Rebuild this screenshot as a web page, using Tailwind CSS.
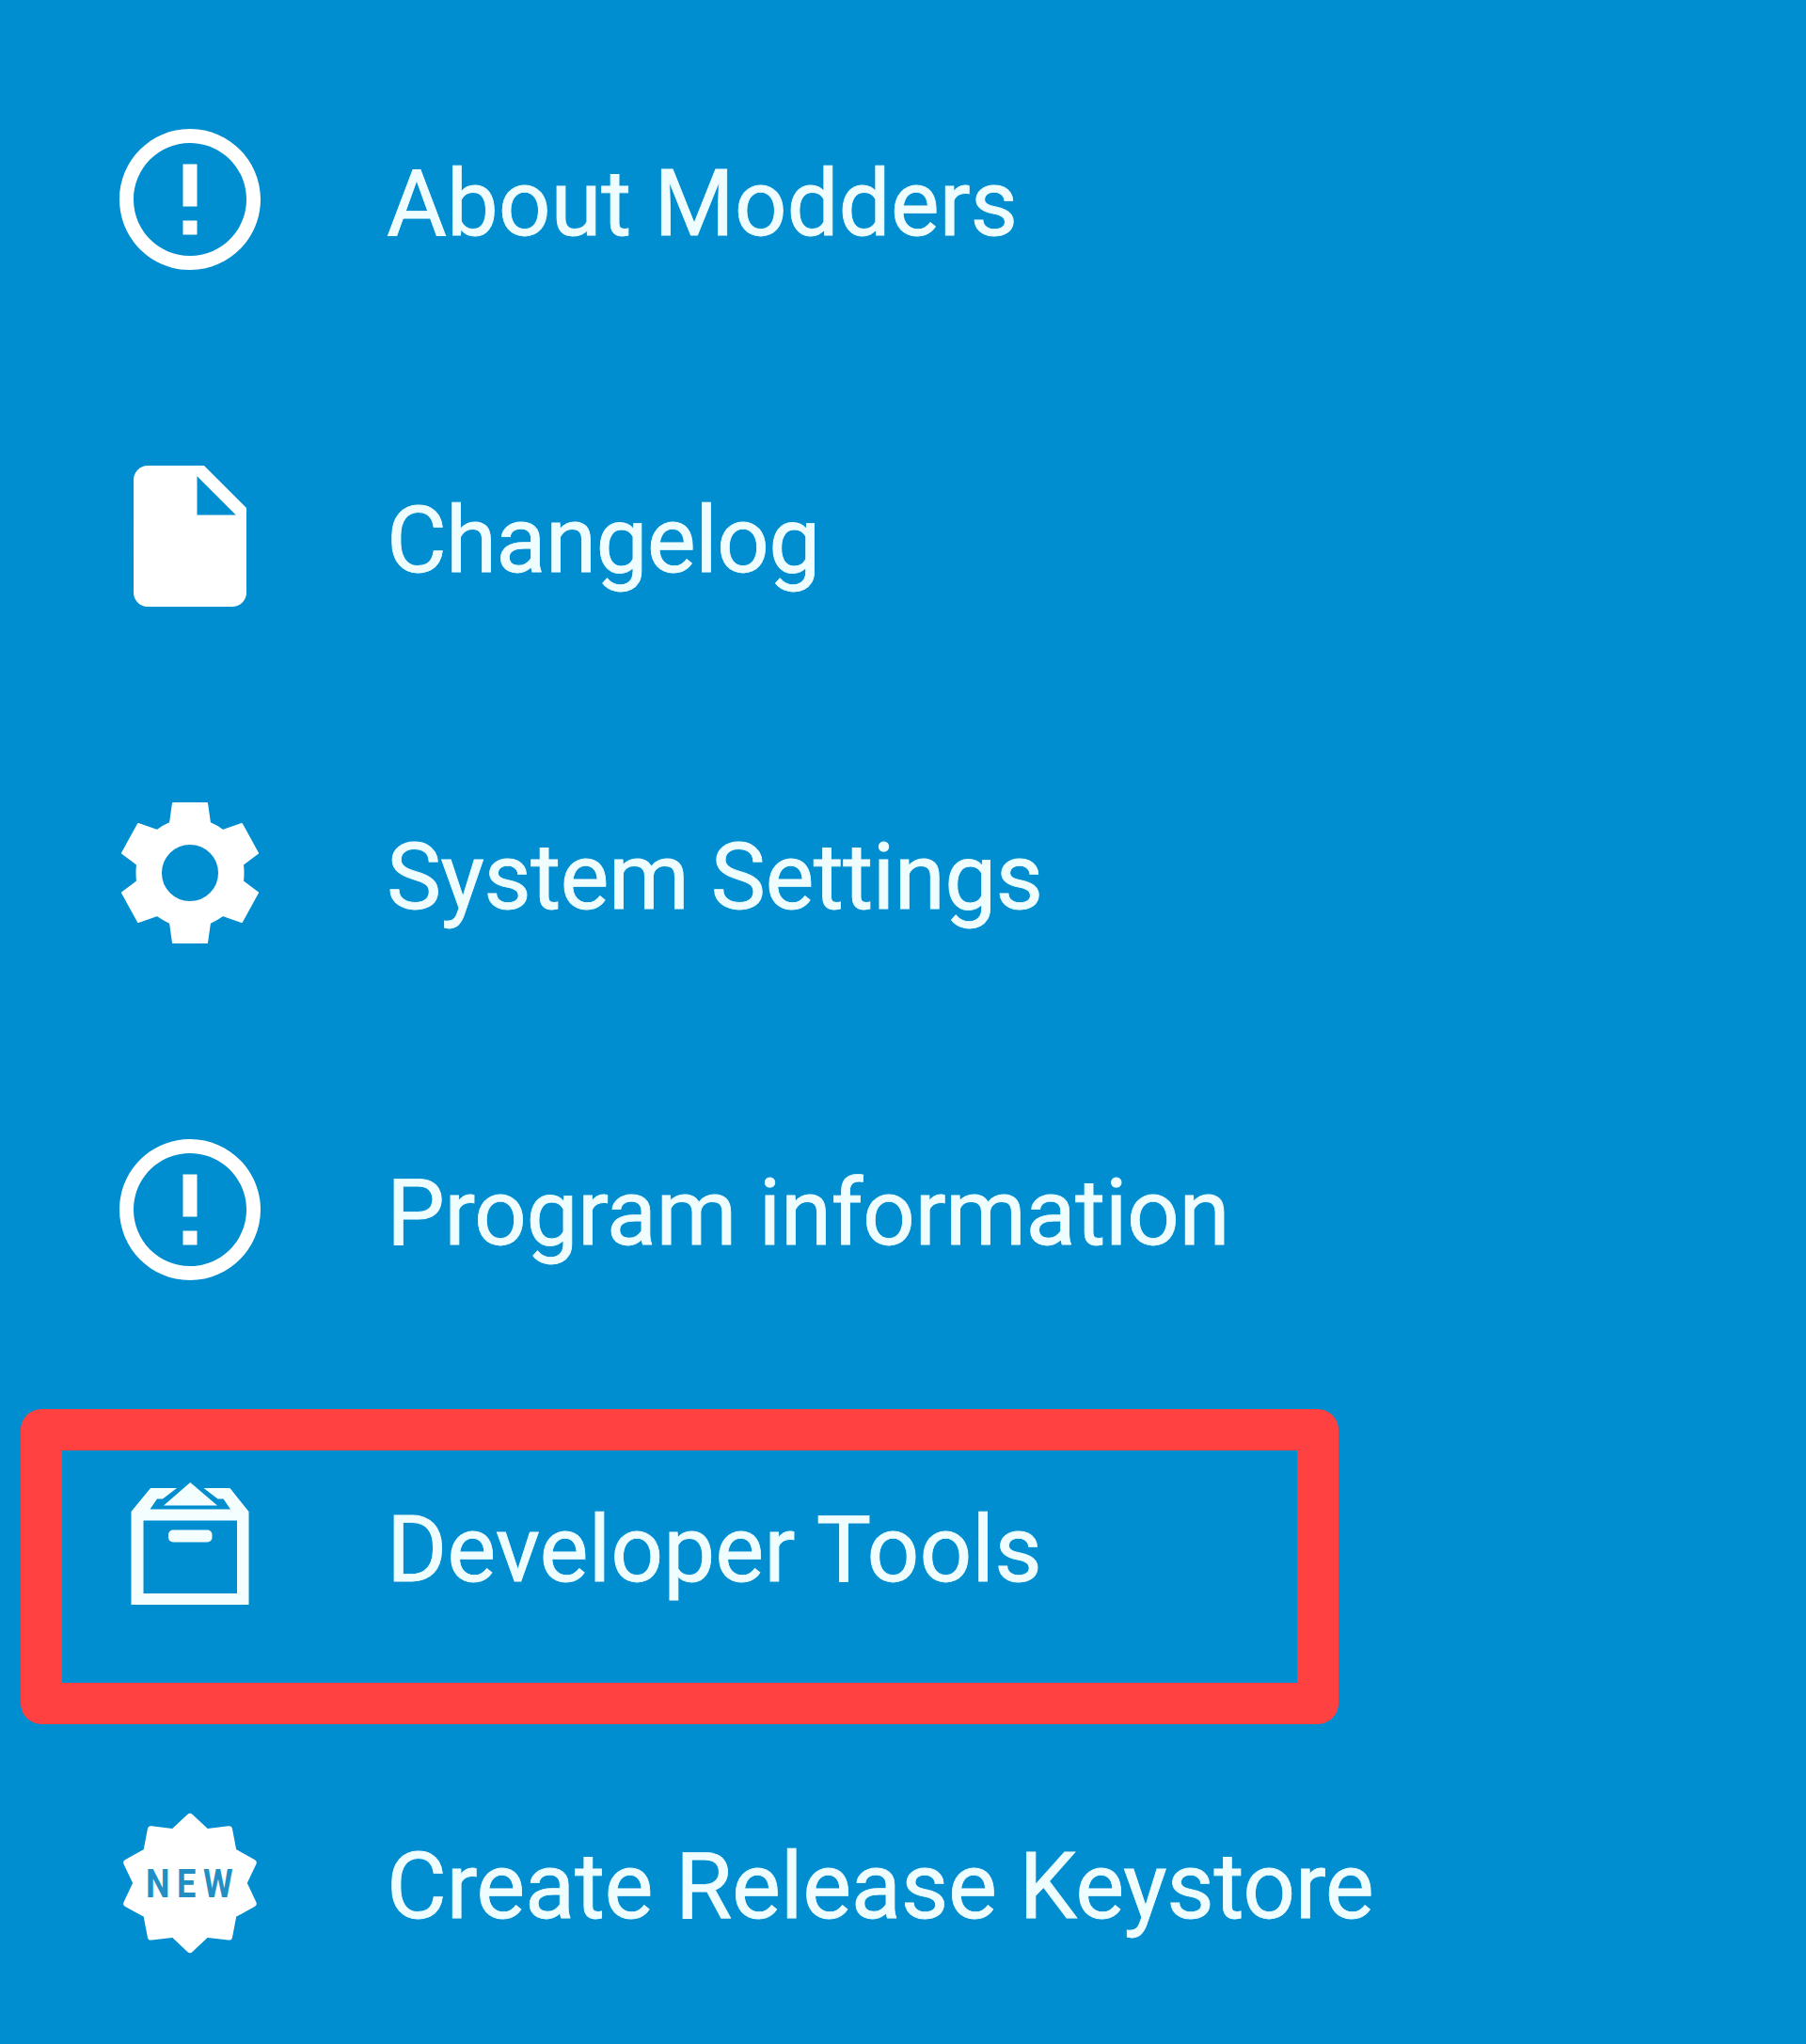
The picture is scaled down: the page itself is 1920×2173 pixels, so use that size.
<!DOCTYPE html>
<html lang="en">
<head>
<meta charset="utf-8">
<title>Menu</title>
<script src="https://cdn.jsdelivr.net/npm/@tailwindcss/browser@4"></script>
</head>
<body class="bg-[#008ed0]">
<nav class="relative h-[2173px] w-[1920px] overflow-hidden bg-[#008ed0] pt-[33px] font-['Roboto',sans-serif] text-[98px] leading-none text-[#effdff] [-webkit-text-stroke:0.8px_#effdff]">
  <ul class="flex flex-col">
    <li class="flex h-[358px] items-center gap-[119px] pl-[112px]">
      <svg class="size-[180px] shrink-0" viewBox="0 0 24 24" fill="#fff" stroke="none"><path d="M11 15h2v2h-2zm0-8h2v6h-2zm.99-5C6.47 2 2 6.48 2 12s4.47 10 9.99 10C17.52 22 22 17.52 22 12S17.52 2 11.99 2zM12 20c-4.42 0-8-3.58-8-8s3.58-8 8-8 8 3.58 8 8-3.58 8-8 8z"/></svg>
      <span class="whitespace-nowrap pt-[9px] tracking-[-0.15px]">About Modders</span>
    </li>
    <li class="flex h-[358px] items-center gap-[119px] pl-[112px]">
      <svg class="size-[180px] shrink-0" viewBox="0 0 24 24" fill="#fff" stroke="none"><path d="M6 2c-1.1 0-1.99.9-1.99 2L4 20c0 1.1.89 2 1.99 2H18c1.1 0 2-.9 2-2V8l-6-6H6zm7 7V3.5L18.5 9H13z"/></svg>
      <span class="whitespace-nowrap pt-[9px] tracking-[-0.7px]">Changelog</span>
    </li>
    <li class="flex h-[358px] items-center gap-[119px] pl-[112px]">
      <svg class="size-[180px] shrink-0" viewBox="0 0 180 180" fill="#fff" stroke="#fff" stroke-width="2" stroke-linejoin="round"><path fill-rule="evenodd" d="M72 16H108L111 37Q118 40 125 45L145 38L162 69L146 81Q147 90 146 99L162 111L145 142L125 135Q118 140 111 143L108 164H72L69 143Q62 140 55 135L35 142L18 111L34 99Q33 90 34 81L18 69L35 38L55 45Q62 40 69 37ZM90 59A31 31 0 1 0 90 121A31 31 0 1 0 90 59Z"/></svg>
      <span class="whitespace-nowrap pt-[9px] tracking-[-0.65px]">System Settings</span>
    </li>
    <li class="flex h-[358px] items-center gap-[119px] pl-[112px]">
      <svg class="size-[180px] shrink-0" viewBox="0 0 24 24" fill="#fff" stroke="none"><path d="M11 15h2v2h-2zm0-8h2v6h-2zm.99-5C6.47 2 2 6.48 2 12s4.47 10 9.99 10C17.52 22 22 17.52 22 12S17.52 2 11.99 2zM12 20c-4.42 0-8-3.58-8-8s3.58-8 8-8 8 3.58 8 8-3.58 8-8 8z"/></svg>
      <span class="whitespace-nowrap pt-[8px] tracking-[-0.53px]">Program information</span>
    </li>
    <li class="flex h-[358px] items-center gap-[119px] pl-[112px]">
      <svg class="size-[180px] shrink-0" viewBox="0 0 180 180" fill="#f4feff">
        <path fill-rule="evenodd" d="M27.5 152V53L48 28H76L61 39.5H55L47.5 50.5H133L125.500 39.500H119.500L104.500 28H132.500L152.500 53V152ZM40.500 62.500V140H140V62.500Z"/>
        <path d="M90.300 22L119 46.500H62Z"/>
        <rect x="67" y="72.500" width="46.500" height="13" rx="5"/>
      </svg>
      <span class="whitespace-nowrap pt-[7px]">Developer Tools</span>
    </li>
    <li class="flex h-[358px] items-center gap-[119px] pl-[112px]">
      <svg class="size-[180px] shrink-0" viewBox="0 0 180 180">
        <polygon transform="translate(2.200 2.200) scale(.975)" fill="#fff" stroke="#fff" stroke-width="8" stroke-linejoin="round" points="90,18 107.900,34.800 132.300,31.800 136.900,55.900 158.500,67.800 148,90 158.500,112.200 136.900,124.100 132.300,148.200 107.900,145.200 90,162 72.100,145.200 47.700,148.200 43.100,124.100 21.500,112.200 32,90 21.500,67.800 43.100,55.900 47.700,31.800 72.100,34.800"/>
        <text class="[-webkit-text-stroke:0.8px_#228fc4]" transform="translate(43 104.500) scale(.84 1)" font-size="43" font-weight="700" letter-spacing="9" fill="#228fc4">NEW</text>
      </svg>
      <span class="whitespace-nowrap pt-[7px] tracking-[-0.37px]">Create Release Keystore</span>
    </li>
  </ul>
  <!-- Highlight frame over the Developer Tools row -->
  <div class="absolute left-[22px] top-[1498px] h-[335px] w-[1401px] rounded-[22px] border-[44px] border-[#ff4142]"></div>
</nav>
</body>
</html>
